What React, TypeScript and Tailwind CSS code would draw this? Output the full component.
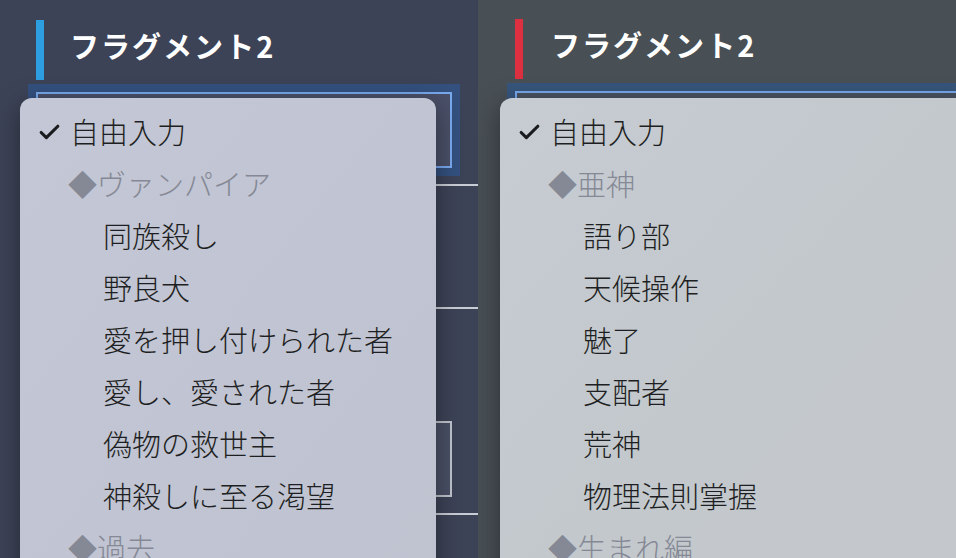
import { Check } from 'lucide-react';

type Item = { label: string; kind: 'free' | 'group' | 'option' };

const vampire: Item[] = [
  { label: '自由入力', kind: 'free' },
  { label: '◆ヴァンパイア', kind: 'group' },
  { label: '同族殺し', kind: 'option' },
  { label: '野良犬', kind: 'option' },
  { label: '愛を押し付けられた者', kind: 'option' },
  { label: '愛し、愛された者', kind: 'option' },
  { label: '偽物の救世主', kind: 'option' },
  { label: '神殺しに至る渇望', kind: 'option' },
  { label: '◆過去', kind: 'group' },
  { label: '孤児', kind: 'option' },
];

const demigod: Item[] = [
  { label: '自由入力', kind: 'free' },
  { label: '◆亜神', kind: 'group' },
  { label: '語り部', kind: 'option' },
  { label: '天候操作', kind: 'option' },
  { label: '魅了', kind: 'option' },
  { label: '支配者', kind: 'option' },
  { label: '荒神', kind: 'option' },
  { label: '物理法則掌握', kind: 'option' },
  { label: '◆生まれ編', kind: 'group' },
  { label: '捨て子', kind: 'option' },
];

function Menu({ items, className }: { items: Item[]; className: string }) {
  return (
    <div
      className={`absolute top-[98px] h-[520px] rounded-[12px] pt-[8px] shadow-[0_6px_26px_rgba(0,0,0,0.4)] ${className}`}
    >
      {items.map((item, i) => {
        if (item.kind === 'free') {
          return (
            <div key={i} className="flex h-[52px] items-center pl-[17px] text-[29px] font-light text-[#1e1f22]">
              <span className="flex w-[33px] items-center">
                <Check size={25} strokeWidth={3} className="text-[#1a1b1e]" />
              </span>
              {item.label}
            </div>
          );
        }
        if (item.kind === 'group') {
          return (
            <div key={i} className="flex h-[52px] items-center pl-[48px] text-[29px] font-light text-[#858995]">
              {item.label}
            </div>
          );
        }
        return (
          <div key={i} className="flex h-[52px] items-center pl-[83px] text-[29px] font-light text-[#1e1f22]">
            {item.label}
          </div>
        );
      })}
    </div>
  );
}

function Panel({ items }: { items: Item[] }) {
  return (
    <section className="relative h-[558px] w-[478px] shrink-0 overflow-hidden bg-[#3d4357]">
      <div className="pl-[28px]">
        <div className="box-content flex h-[60px] pt-[20px] pl-[8px]">
          <div className="h-[60px] w-[8px] shrink-0 bg-[#2d9ee0]" />
          <h2 className="pl-[26px] text-[29px] leading-[50px] font-bold tracking-[0.07em] text-white">
            フラグメント2
          </h2>
        </div>

        <div className="mt-[4px] w-[432px] bg-[#33507e] p-[8px]">
          <div className="h-[76px] border-2 border-[#79a9ee] bg-[#4a5068]" />
        </div>

        <div className="mt-[8px] h-[123px] border-t-2 border-[#c8ccd4]" />
        <div className="flex h-[206px] items-end border-t-2 border-[#c8ccd4] pb-[16px]">
          <div className="ml-[8px] h-[76px] w-[416px] border-2 border-[#c0c4cc] bg-[#4a5066]" />
        </div>
        <div className="h-[60px] border-t-2 border-[#c8ccd4]" />
      </div>
      <Menu
        items={items}
        className="left-[20px] w-[416px] bg-gradient-to-br from-[#c4c7d5] via-[#c1c4d2] to-[#bfc2cf]"
      />
    </section>
  );
}

export default function App() {
  return (
    <div className="flex h-[558px] w-[956px] overflow-hidden font-['Noto_Sans_CJK_JP','Noto_Sans',sans-serif]">
      <Panel items={vampire} />
      <section className="relative h-[558px] flex-1 overflow-hidden bg-[#484f55]">
        <div className="pl-[29px]">
          <div className="box-content flex h-[60px] pt-[19px] pl-[8px]">
            <div className="h-[60px] w-[8px] shrink-0 bg-[#dc3041]" />
            <h2 className="pl-[28px] text-[29px] leading-[50px] font-bold tracking-[0.07em] text-white">
              フラグメント2
            </h2>
          </div>
          <div className="mt-[4px] w-[460px] bg-[#37557c] p-[8px]">
            <div className="h-[76px] border-2 border-[#79a9ee] bg-[#4a5362]" />
          </div>
        </div>
        <Menu
          items={demigod}
          className="left-[22px] w-[470px] bg-gradient-to-br from-[#c6ccd2] via-[#c3c8cd] to-[#c4c8cd]"
        />
      </section>
    </div>
  );
}
